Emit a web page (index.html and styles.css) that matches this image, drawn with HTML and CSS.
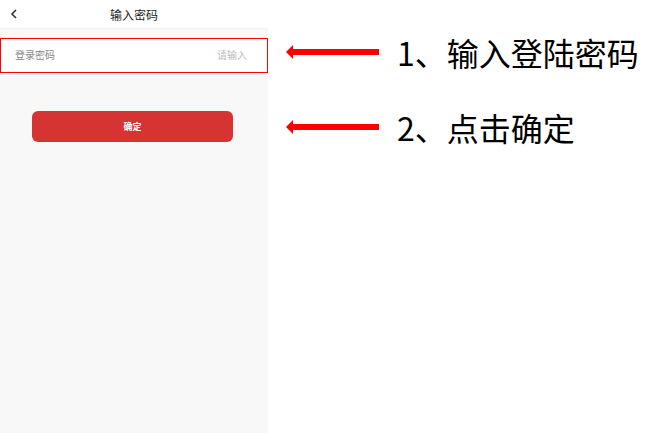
FILE: index.html
```html
<!DOCTYPE html>
<html>

<head>
    <meta charset="utf-8">
    <link rel="stylesheet" href="styles.css">
</head>

<body>
    <div class="page">
        <div class="phone">
            <div class="nav-bar">
                <svg class="back-icon" width="8" height="10" viewBox="0 0 8 10">
                    <path d="M6 1 L2 5 L6 9" fill="none" stroke="#333" stroke-width="1.6" />
                </svg>
                <span class="nav-title">输入密码</span>
            </div>

            <div class="field-row">
                <span class="field-label">登录密码</span>
                <span class="field-placeholder">请输入</span>
            </div>

            <button type="button" class="confirm-btn">确定</button>
        </div>

        <div class="notes">
            <div class="note">
                <div class="arrow"></div>
                <span class="note-text">1、输入登陆密码</span>
            </div>
            <div class="note">
                <div class="arrow"></div>
                <span class="note-text">2、点击确定</span>
            </div>
        </div>
    </div>
</body>

</html>
```

FILE: styles.css
```css
body {
    margin: 0;
    padding: 0;
    background-color: #fff;
    font-family: "Noto Sans CJK SC", "Noto Sans", sans-serif;
}

.page {
    display: flex;
    height: 433px;
}

.phone {
    width: 268px;
    background-color: #f8f8f8;
    display: flex;
    flex-direction: column;
}

.nav-bar {
    position: relative;
    height: 28px;
    background-color: #fff;
    border-bottom: 1px solid #f2f2f2;
    display: flex;
    align-items: center;
    justify-content: center;
}

.back-icon {
    position: absolute;
    left: 10px;
    top: 9px;
}

.nav-title {
    font-size: 12px;
    color: #222;
}

.field-row {
    margin-top: 9px;
    height: 32px;
    background-color: #fff;
    border: 1px solid #f00;
    display: flex;
    align-items: center;
    justify-content: space-between;
    padding: 0 20px 3px 14px;
    box-sizing: border-box;
    height: 35px;
}

.field-label {
    font-size: 10px;
    color: #888;
}

.field-placeholder {
    font-size: 10px;
    color: #bbb;
}

.confirm-btn {
    margin: 38px 0 0 32px;
    width: 201px;
    height: 31px;
    border: none;
    border-radius: 6px;
    background-color: #d63333;
    color: #fff;
    font-family: inherit;
    font-size: 9px;
    font-weight: bold;
}

.notes {
    padding: 32px 0 0 19px;
    display: flex;
    flex-direction: column;
    gap: 35px;
}

.note {
    height: 40px;
    display: flex;
    align-items: center;
}

.arrow {
    position: relative;
    width: 86px;
    height: 6px;
    margin-left: 6px;
    background-color: #f00;
}

/* arrow head */
.arrow::before {
    content: "";
    position: absolute;
    left: -7px;
    top: -4px;
    border-top: 7px solid transparent;
    border-bottom: 7px solid transparent;
    border-right: 7px solid #f00;
}

.note-text {
    margin-left: 18px;
    font-size: 32px;
    color: #000;
    white-space: nowrap;
}
```
